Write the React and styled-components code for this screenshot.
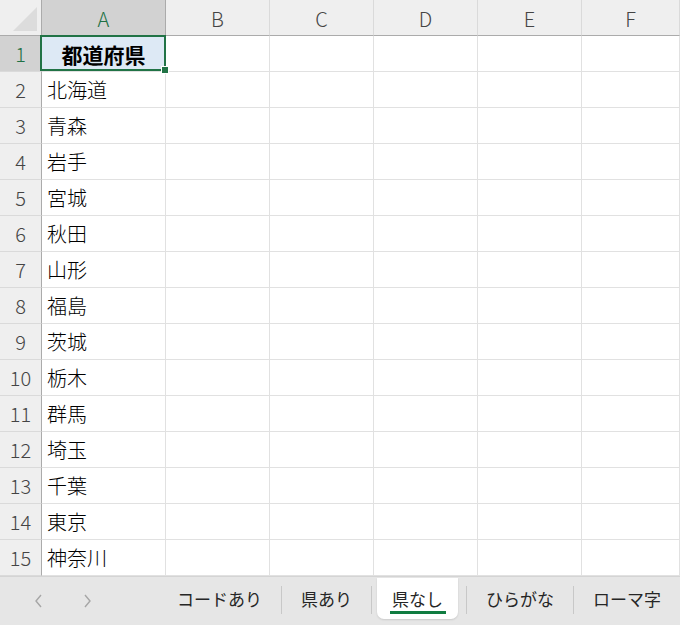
import React from 'react';
import styled, { createGlobalStyle } from 'styled-components';

const GlobalStyle = createGlobalStyle`
  html, body {
    margin: 0;
    padding: 0;
    background: #ffffff;
    overflow: hidden;
  }
  body {
    font-family: "Noto Sans CJK JP", "Noto Sans", sans-serif;
  }
`;

const Window = styled.div`
  width: 680px;
  height: 625px;
  display: flex;
  flex-direction: column;
  background: #ffffff;
`;

const Grid = styled.div`
  display: grid;
  grid-template-columns: 42px 124px 104px 104px 104px 104px 98px;
  grid-template-rows: 36px repeat(15, 36px);
  height: 577px;
  overflow: hidden;
  border-bottom: 1px solid #d4d4d4;
  box-sizing: border-box;
`;

const Corner = styled.div`
  background: #efefef;
  border-right: 1px solid #ababab;
  border-bottom: 1px solid #ababab;
  box-sizing: border-box;
  position: relative;

  &::after {
    content: '';
    position: absolute;
    right: 4px;
    bottom: 4px;
    width: 0;
    height: 0;
    border-style: solid;
    border-width: 0 0 24px 24px;
    border-color: transparent transparent #dcdcdc transparent;
  }
`;

const ColHead = styled.div`
  background: ${(p) => (p.$active ? '#d2d2d2' : '#efefef')};
  color: ${(p) => (p.$active ? '#1e7145' : '#444444')};
  border-right: 1px solid ${(p) => (p.$active ? '#ababab' : '#dadada')};
  border-bottom: 1px solid #ababab;
  box-sizing: border-box;
  display: flex;
  align-items: center;
  justify-content: center;
  font-size: 20px;
  font-weight: 300;
  padding-top: 1px;
`;

const RowHead = styled.div`
  background: ${(p) => (p.$active ? '#d2d2d2' : '#efefef')};
  color: ${(p) => (p.$active ? '#1e7145' : '#444444')};
  border-right: 1px solid #ababab;
  border-bottom: 1px solid #dadada;
  box-sizing: border-box;
  display: flex;
  align-items: center;
  justify-content: center;
  font-size: 20px;
  font-weight: 300;
`;

const Cell = styled.div`
  border-right: 1px solid #e1e1e1;
  border-bottom: 1px solid #e1e1e1;
  box-sizing: border-box;
  display: flex;
  align-items: center;
  padding-left: 5px;
  font-size: 20px;
  font-weight: 300;
  color: #000000;
  white-space: nowrap;
`;

const HeaderCell = styled(Cell)`
  position: relative;
  background: #dde9f5;
  justify-content: center;
  padding-left: 0;
  font-weight: 700;
  font-size: 21px;

  &::before {
    content: '';
    position: absolute;
    left: -2px;
    top: -1px;
    right: -1px;
    bottom: 0;
    border: 2px solid #217346;
  }

  &::after {
    content: '';
    position: absolute;
    right: -4px;
    bottom: -3px;
    width: 6px;
    height: 6px;
    background: #217346;
    border: 1px solid #ffffff;
    z-index: 1;
  }
`;

const TabBar = styled.div`
  flex: 1;
  background: #e6e6e6;
  display: flex;
  align-items: stretch;
`;

const NavArea = styled.div`
  width: 164px;
  display: flex;
  align-items: center;
  padding-left: 33px;
  gap: 36px;
  box-sizing: border-box;
`;

const Tabs = styled.div`
  display: flex;
  align-items: flex-start;
  padding-top: 1px;
`;

const Tab = styled.div`
  position: relative;
  height: 41px;
  display: flex;
  align-items: center;
  padding: 0 ${(p) => (p.$active ? '15px' : '19px')};
  font-size: 17px;
  color: #262626;
  background: ${(p) => (p.$active ? '#ffffff' : 'transparent')};
  border-radius: 0 0 7px 7px;
  margin: ${(p) => (p.$active ? '0 8px 0 5px' : '0')};
  box-shadow: ${(p) => (p.$active ? '0 1px 2px rgba(0,0,0,0.12)' : 'none')};
  white-space: nowrap;

  &::after {
    content: '';
    display: ${(p) => (p.$active ? 'block' : 'none')};
    position: absolute;
    left: 13px;
    right: 12px;
    bottom: 5px;
    height: 3px;
    background: #107c41;
  }
`;

const Sep = styled.div`
  width: 1px;
  height: 28px;
  margin-top: 8px;
  background: #c8c8c8;
`;

const Chevron = ({ dir }) => (
  <svg width="12" height="16" viewBox="0 0 12 16">
    <path
      d={dir === 'left' ? 'M8 2 L3 8 L8 14' : 'M4 2 L9 8 L4 14'}
      fill="none"
      stroke="#a6a6a6"
      strokeWidth="1.4"
    />
  </svg>
);

const cols = ['A', 'B', 'C', 'D', 'E', 'F'];
const prefs = [
  '北海道', '青森', '岩手', '宮城', '秋田', '山形', '福島',
  '茨城', '栃木', '群馬', '埼玉', '千葉', '東京', '神奈川',
];
const tabs = ['コードあり', '県あり', '県なし', 'ひらがな', 'ローマ字'];

export default function App() {
  return (
    <Window>
      <GlobalStyle />
      <Grid>
        <Corner />
        {cols.map((c) => (
          <ColHead key={c} $active={c === 'A'}>{c}</ColHead>
        ))}
        {Array.from({ length: 15 }, (_, r) => (
          <React.Fragment key={r}>
            <RowHead $active={r === 0}>{r + 1}</RowHead>
            {r === 0 ? <HeaderCell>都道府県</HeaderCell> : <Cell>{prefs[r - 1]}</Cell>}
            {cols.slice(1).map((c) => (
              <Cell key={c} />
            ))}
          </React.Fragment>
        ))}
      </Grid>
      <TabBar>
        <NavArea>
          <Chevron dir="left" />
          <Chevron dir="right" />
        </NavArea>
        <Tabs>
          {tabs.map((t, i) => (
            <React.Fragment key={t}>
              {i > 0 && <Sep />}
              <Tab $active={t === '県なし'}>{t}</Tab>
            </React.Fragment>
          ))}
        </Tabs>
      </TabBar>
    </Window>
  );
}
